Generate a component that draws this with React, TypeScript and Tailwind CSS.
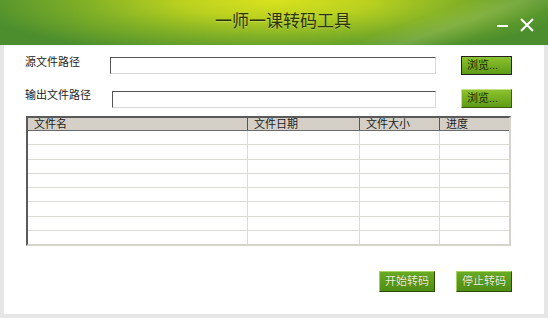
import React from "react";

const font = { fontFamily: '"Liberation Sans", "Noto Sans CJK SC", sans-serif' };

function PathRow({ label, inputMl, focused, mt }: { label: string; inputMl: string; focused?: boolean; mt: string }) {
  return (
    <div className={`flex items-start ${mt}`}>
      <div className="w-[85px] pl-[21px] text-[11px] leading-[13px] text-[#222] whitespace-nowrap">{label}</div>
      <div
        className={`${inputMl} ${focused ? "mt-[1px] w-[326px]" : "mt-[2px] w-[324px]"} h-[17px] bg-white border border-t-[#555] border-l-[#555] border-r-[#d8d8d8] border-b-[#d8d8d8]`}
      />
      <button
        className={`ml-[25px] w-[51px] h-[19px] text-left pl-[5px] text-[11px] leading-[15px] text-[#1c2a06] bg-gradient-to-b from-[#8cc22c] to-[#5e9c16] ${
          focused
            ? "border border-[#222]"
            : "border border-t-[#c8e08a] border-l-[#c8e08a] border-r-[#3c5a10] border-b-[#3c5a10]"
        }`}
      >
        浏览...
      </button>
    </div>
  );
}

const cols = [
  { name: "文件名", w: "w-[220px]" },
  { name: "文件日期", w: "w-[112px]" },
  { name: "文件大小", w: "w-[80px]" },
  { name: "进度", w: "flex-1" },
];

export default function App() {
  return (
    <div className="w-[548px] h-[318px] flex flex-col bg-[#e6e6e6] overflow-hidden" style={font}>
      <header className="relative h-[45px] shrink-0 flex items-center justify-center bg-[radial-gradient(ellipse_55%_130%_at_50%_0%,#d9e21e_0%,#bcd21f_30%,#82b126_62%,#4c8e2e_100%)]">
        <div className="absolute inset-0 bg-[linear-gradient(160deg,transparent_70%,rgba(255,255,255,0.12)_78%,transparent_86%)]" />
        <h1 className="relative ml-[18px] -mt-[1px] text-[17px] tracking-[0px] text-[#2c3410] [text-shadow:0_1px_1px_rgba(255,255,255,0.25)]">
          一师一课转码工具
        </h1>
        <div className="absolute left-[497px] top-[25px] w-[11px] h-[2px] bg-white" />
        <svg className="absolute left-[519px] top-[17px]" width="16" height="16" viewBox="0 0 16 16">
          <path d="M2 2L14 14M14 2L2 14" stroke="white" strokeWidth="2" />
        </svg>
      </header>
      <main className="flex-1 mx-[4px] mb-[4px] bg-white flex flex-col">
        <PathRow label="源文件路径" inputMl="ml-[21px]" focused mt="mt-[11px]" />
        <PathRow label="输出文件路径" inputMl="ml-[23px]" mt="mt-[14px]" />
        <div className="ml-[22px] mt-[8px] w-[485px] h-[130px] flex flex-col border-2 border-t-[#5a5a5a] border-l-[#5a5a5a] border-r-[#d6d3cc] border-b-[#d6d3cc] bg-white">
          <div className="flex h-[13px] bg-[#d4d0c8] border-b border-[#6a6a6a]">
            {cols.map((c, i) => (
              <div
                key={c.name}
                className={`${c.w} pl-[6px] text-[11px] leading-[13px] text-[#222] ${i < 3 ? "border-r border-[#555]" : ""}`}
              >
                {c.name}
              </div>
            ))}
          </div>
          <div className="flex-1 flex flex-col">
            {Array.from({ length: 8 }).map((_, r) => (
              <div key={r} className={`flex h-[14.3px] ${r < 7 ? "border-b border-[#dcdad4]" : ""}`}>
                {cols.map((c, i) => (
                  <div key={c.name} className={`${c.w} ${i < 3 ? "border-r border-[#dcdad4]" : ""}`} />
                ))}
              </div>
            ))}
          </div>
        </div>
        <div className="flex justify-end gap-[21px] mt-[25px] mr-[32px]">
          {["开始转码", "停止转码"].map((t) => (
            <button
              key={t}
              className="w-[56px] h-[21px] text-[11px] leading-[19px] text-[#eef6dc] bg-gradient-to-b from-[#68aa22] to-[#4e8e14] border border-t-[#a8d060] border-l-[#a8d060] border-r-[#2c4a0c] border-b-[#2c4a0c] [text-shadow:0_0_1px_rgba(0,0,0,0.5)]"
            >
              {t}
            </button>
          ))}
        </div>
      </main>
    </div>
  );
}
